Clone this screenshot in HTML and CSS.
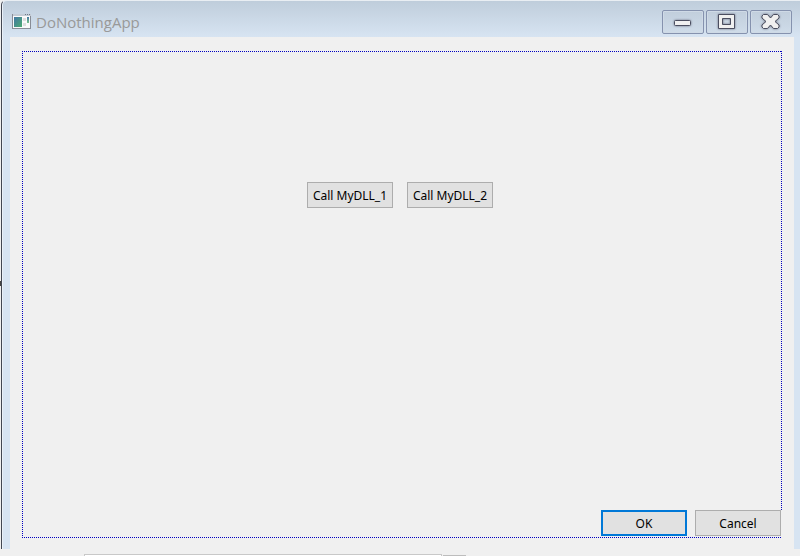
FILE: index.html
```html
<!DOCTYPE html>
<html lang="en">
<head>
<meta charset="utf-8">
<title>DoNothingApp</title>
<link rel="stylesheet" href="styles.css">
</head>
<body>
<main class="window">
  <header class="titlebar">
    <svg class="app-icon" width="19" height="16" viewBox="0 0 19 16" aria-hidden="true">
      <defs>
        <linearGradient id="screen" x1="0" y1="0" x2="1" y2="1"><stop offset="0" stop-color="#4377a4"/><stop offset="1" stop-color="#4cab72"/></linearGradient>
        <linearGradient id="bar" x1="0" y1="0" x2="0" y2="1"><stop offset="0" stop-color="#4377a4"/><stop offset="1" stop-color="#7cc48c"/></linearGradient>
      </defs>
      <path d="M0 0h19v15H0z" fill="#8b8e98"/>
      <path d="M1 1h17v13H1z" fill="#fafafa"/>
      <path d="M0 0h19v2H0z" fill="#c3cbd5"/>
      <path d="M13 0h1v1h-1zM15 0h1v1h-1zM17 0h1v1h-1z" fill="#6e7a88"/>
      <path d="M0 0h1v15H0zM18 2h1v13h-1z" fill="#888c96"/>
      <path d="M2 3h8v10H2z" fill="url(#screen)"/>
      <path d="M11 4h3v3h-3zM11 9h3v3h-3z" fill="#dedede"/>
      <path d="M15 3h2v6h-2z" fill="url(#bar)"/>
    </svg>
    <h1 class="title">DoNothingApp</h1>
    <div class="caption-buttons">
      <button class="caption" type="button" aria-label="Minimize">
        <svg width="40" height="22" viewBox="0 0 40 22"><rect x="11.500" y="9.500" width="16" height="5" rx="1"/></svg>
      </button>
      <button class="caption" type="button" aria-label="Maximize">
        <svg width="40" height="22" viewBox="0 0 40 22"><path d="M11.500 3.500h16v14h-16zM15.500 7.500v6h8v-6z"/></svg>
      </button>
      <button class="caption" type="button" aria-label="Close">
        <svg width="40" height="22" viewBox="0 0 40 22"><path d="M12.500 3.500h4l3 3.500 3-3.500h4l1.500 1.500v2l-4 3.500 4 3.500v2l-1.500 1.500h-4l-3-3.500-3 3.500h-4L11 16v-2l4-3.500L11 7V5z"/></svg>
      </button>
    </div>
  </header>
  <section class="client">
    <div class="panel">
      <div class="calls">
        <button class="button" type="button">Call MyDLL_1</button>
        <button class="button" type="button">Call MyDLL_2</button>
      </div>
      <div class="actions">
        <button class="button button-default" type="button">OK</button>
        <button class="button" type="button">Cancel</button>
      </div>
    </div>
  </section>
</main>
<footer class="below"><span class="box-edge"></span><span class="bar-edge"></span></footer>
</body>
</html>
```
FILE: styles.css
```css
* {
  box-sizing: border-box;
}

body {
  margin: 0;
  min-height: 100vh;
  display: flex;
  flex-direction: column;
  background: linear-gradient(#444, #444) 0 51% / 1px 5px no-repeat #f0f0f0;
  font-family: "Noto Sans", "DejaVu Sans Condensed", sans-serif;
  font-size: 12px;
  color: #000;
}

.window {
  flex: 1;
  display: flex;
  flex-direction: column;
  margin-left: 1px;
  padding: 0 6px 0 8px;
  border-top: 1px solid #e9eef3;
  border-left: 1px solid #434752;
  border-top-left-radius: 5px;
  background: linear-gradient(#bfcddb, #d7e4f2 36px);
  box-shadow: inset 1px 0 #eaf1f8;
}

.titlebar {
  display: flex;
  align-items: flex-start;
  height: 36px;
  padding-left: 2px;
}

.app-icon {
  margin-top: 13px;
}

.title {
  flex: 1;
  margin: 10px 0 0 5px;
  font: 15px/22px "Open Sans", sans-serif;
  color: #999;
}

.caption-buttons {
  display: flex;
  gap: 2px;
  margin: 9px 2px 0 0;
}

.caption {
  width: 42px;
  height: 24px;
  padding: 0;
  border: 1px solid #8592ae;
  border-radius: 2px;
  background: linear-gradient(#c1cedc, #cfdce9);
  box-shadow: inset 0 0 0 1px #cfdae6;
}

.caption svg {
  display: block;
  fill: #f0f0f0;
  fill-rule: evenodd;
  stroke: #4b4e60;
  stroke-linejoin: round;
  filter: drop-shadow(0 0 1px #6b7080);
}

.client {
  flex: 1;
  display: flex;
  padding: 14px 12px 11px;
  background: #f0f0f0;
}

.panel {
  flex: 1;
  display: flex;
  flex-direction: column;
  justify-content: space-between;
  padding: 131px 1px 2px;
  background:
    repeating-linear-gradient(90deg, #0000c0 0 1px, transparent 1px 2px) top / 100% 1px no-repeat,
    repeating-linear-gradient(90deg, #0000c0 0 1px, transparent 1px 2px) bottom / 100% 1px no-repeat,
    repeating-linear-gradient(#0000c0 0 1px, transparent 1px 2px) left / 1px 100% no-repeat,
    repeating-linear-gradient(#0000c0 0 1px, transparent 1px 2px) right top / 1px calc(100% - 28px) no-repeat;
}

.calls {
  display: flex;
  justify-content: center;
  gap: 14px;
  padding-right: 4px;
}

.actions {
  display: flex;
  justify-content: flex-end;
  gap: 8px;
}

.button {
  width: 86px;
  height: 26px;
  padding: 0;
  border: 1px solid #adadad;
  background: #e1e1e1;
  font: inherit;
  color: inherit;
  white-space: nowrap;
}

.button-default {
  border: 2px solid #0078d7;
}

.below {
  display: flex;
  align-items: flex-end;
  gap: 1px;
  height: 7px;
  padding-left: 84px;
}

.box-edge {
  width: 50%;
  height: 2px;
  border: 1px solid #c8c8c8;
  border-bottom: 0;
  background: #fff;
}

.bar-edge {
  width: 23px;
  height: 1px;
  background: #bdbdbd;
}
```
